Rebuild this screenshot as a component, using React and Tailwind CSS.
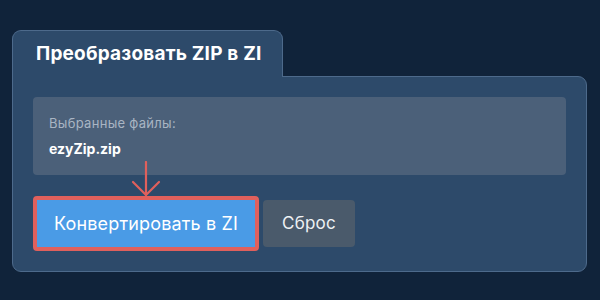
import React from 'react';

const App = () => {
  return (
    <div
      className="w-[600px] h-[300px] bg-[#10233a] overflow-hidden"
      style={{ fontFamily: 'Inter, "Noto Sans", sans-serif' }}
    >
      <div className="pt-[30px] pl-[12px] w-[587px]">
        {/* tab */}
        <div className="relative z-10 -mb-px w-[271px] h-[47px] bg-[#2d4a6a] border border-b-0 border-[#4d6a8b] rounded-t-[9px] flex items-center pl-[23px]">
          <h2 className="text-[19px] font-bold text-white tracking-[0.2px]">Преобразовать ZIP в ZI</h2>
        </div>

        {/* panel */}
        <div className="bg-[#2d4a6a] border border-[#4d6a8b] rounded-[9px] rounded-tl-none p-[20px]">
          <div className="bg-[#4b6079] rounded-[4px] px-[16px] pt-[16px] pb-[16px] h-[78px]">
            <p className="text-[13px] leading-[20px] text-[#a9b5c3] tracking-[0.3px]">Выбранные файлы:</p>
            <p className="mt-[6px] text-[14px] leading-[20px] font-bold text-white">ezyZip.zip</p>
          </div>

          <div className="mt-[21px] flex items-center">
            <div className="relative border-[4px] border-[#e0605c] rounded-[4px]">
              <svg
                className="absolute left-1/2 -translate-x-1/2 -top-[39px]"
                width="30"
                height="36"
                viewBox="0 0 30 36"
                fill="none"
                stroke="#e0605c"
                strokeWidth="2.2"
                strokeLinecap="round"
                strokeLinejoin="round"
              >
                <path d="M15 1 V34" />
                <path d="M2 21 L15 34 L28 21" />
              </svg>
              <button className="w-[218px] h-[47px] bg-[#4a9be6] text-white text-[18px] tracking-[0.15px] block">
                Конвертировать в ZI
              </button>
            </div>
            <button className="ml-[4px] w-[92px] h-[47px] bg-[#4a5a6b] text-[#eef1f4] text-[17px] tracking-[0.2px] rounded-[4px]">
              Сброс
            </button>
          </div>
        </div>
      </div>
    </div>
  );
};

export default App;
